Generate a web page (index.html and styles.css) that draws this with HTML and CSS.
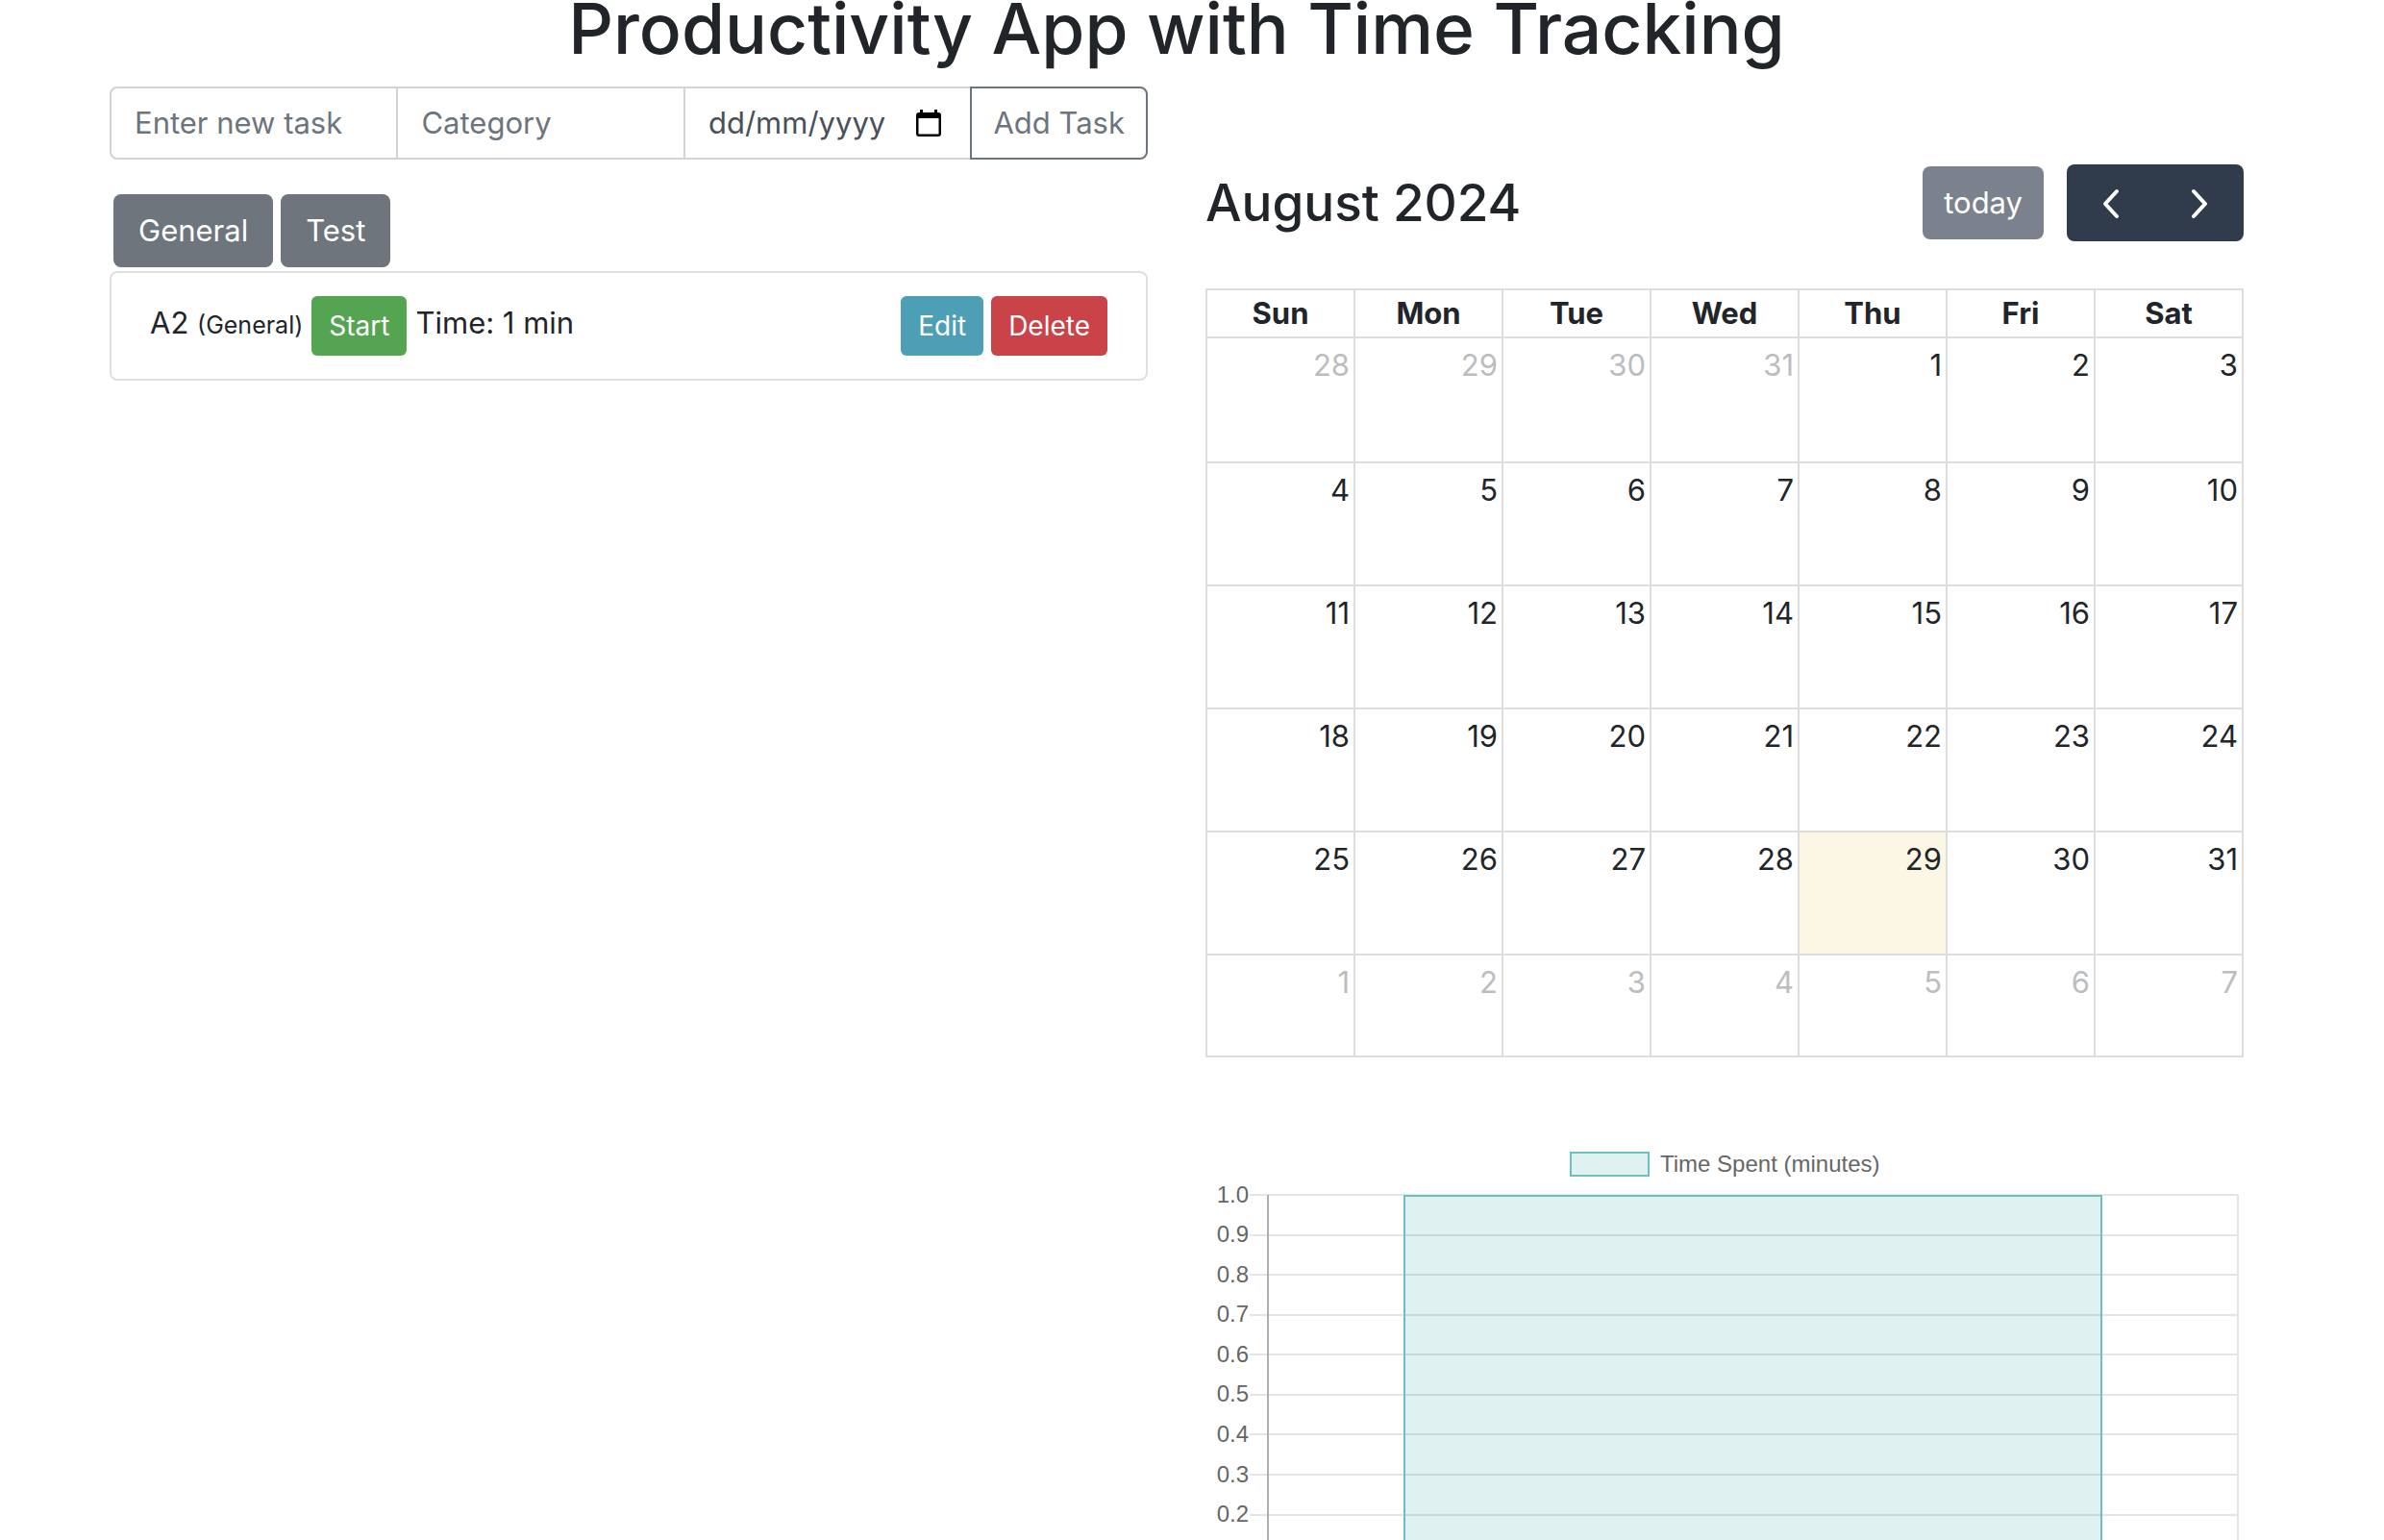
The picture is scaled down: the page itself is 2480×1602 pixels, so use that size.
FILE: index.html
```html
<!DOCTYPE html>
<html lang="en">
<head>
<meta charset="utf-8">
<title>Productivity App with Time Tracking</title>
<link rel="stylesheet" href="styles.css">
</head>
<body>
<main class="container">
  <h1 class="page-title">Productivity App with Time Tracking</h1>
  <div class="columns">
    <section class="tasks">
      <form class="input-group">
        <input class="field" type="text" placeholder="Enter new task" aria-label="Task">
        <input class="field" type="text" placeholder="Category" aria-label="Category">
        <label class="field date-field">
          <input class="date-input" type="text" placeholder="dd/mm/yyyy" aria-label="Due date">
          <svg class="date-icon" viewBox="0 0 26 30" aria-hidden="true"><path d="M4 1h3v3h12V1h3v3h1a3 3 0 0 1 3 3v19a3 3 0 0 1-3 3H3a3 3 0 0 1-3-3V7a3 3 0 0 1 3-3h1zM2.500 10v16.500h21V10z" fill-rule="evenodd"/></svg>
        </label>
        <button class="add-btn" type="button">Add Task</button>
      </form>
      <div class="categories">
        <button class="btn btn-secondary" type="button">General</button>
        <button class="btn btn-secondary" type="button">Test</button>
      </div>
      <ul class="task-list">
        <li class="task">
          <div class="task-info">
            <span>A2 <small>(General)</small></span>
            <button class="btn btn-sm btn-success" type="button">Start</button>
            <span>Time: 1 min</span>
          </div>
          <div class="task-actions">
            <button class="btn btn-sm btn-info" type="button">Edit</button>
            <button class="btn btn-sm btn-danger" type="button">Delete</button>
          </div>
        </li>
      </ul>
    </section>
    <section class="schedule">
      <div class="toolbar">
        <h2 class="month">August 2024</h2>
        <div class="toolbar-actions">
          <button class="today-btn" type="button">today</button>
          <div class="nav-group">
            <button class="nav-btn" type="button" aria-label="Previous month"><svg viewBox="0 0 48 48"><path d="M30 12 18 25 30 38"/></svg></button>
            <button class="nav-btn" type="button" aria-label="Next month"><svg viewBox="0 0 48 48"><path d="M18 12 30 25 18 38"/></svg></button>
          </div>
        </div>
      </div>
      <table class="calendar">
        <thead><tr><th>Sun</th><th>Mon</th><th>Tue</th><th>Wed</th><th>Thu</th><th>Fri</th><th>Sat</th></tr></thead>
        <tbody>
          <tr class="first"><td class="other">28</td><td class="other">29</td><td class="other">30</td><td class="other">31</td><td>1</td><td>2</td><td>3</td></tr>
          <tr><td>4</td><td>5</td><td>6</td><td>7</td><td>8</td><td>9</td><td>10</td></tr>
          <tr><td>11</td><td>12</td><td>13</td><td>14</td><td>15</td><td>16</td><td>17</td></tr>
          <tr><td>18</td><td>19</td><td>20</td><td>21</td><td>22</td><td>23</td><td>24</td></tr>
          <tr><td>25</td><td>26</td><td>27</td><td>28</td><td class="today">29</td><td>30</td><td>31</td></tr>
          <tr class="last"><td class="other">1</td><td class="other">2</td><td class="other">3</td><td class="other">4</td><td class="other">5</td><td class="other">6</td><td class="other">7</td></tr>
        </tbody>
      </table>
      <svg class="chart" viewBox="0 0 1080 424" role="img" aria-label="Time Spent (minutes)">
        <rect class="bar" x="380" y="21" width="81" height="24"/>
        <text class="chart-text" x="473" y="41">Time Spent (minutes)</text>
        <rect class="fill" x="208" y="65" width="724" height="420"/>
        <path class="grid" d="M46 65H1074M46 107H1074M46 148H1074M46 190H1074M46 231H1074M46 273H1074M46 314H1074M46 356H1074M46 398H1074M1074 65V424"/>
        <path class="axis" d="M65 65V424"/>
        <path class="outline" d="M207 424V66H932V424"/>
        <g class="chart-text ticks">
          <text x="45" y="73">1.0</text><text x="45" y="114">0.9</text><text x="45" y="156">0.8</text>
          <text x="45" y="197">0.7</text><text x="45" y="239">0.6</text><text x="45" y="280">0.5</text>
          <text x="45" y="322">0.4</text><text x="45" y="364">0.3</text><text x="45" y="405">0.2</text>
        </g>
      </svg>
    </section>
  </div>
</main>
</body>
</html>
```
FILE: styles.css
```css
* { box-sizing: border-box; }

body {
  margin: 0;
  padding-right: 32px;
  height: 100vh;
  overflow: hidden;
  background: #fff;
  color: #212529;
  font: 400 31px/48px Inter, "Liberation Sans", sans-serif;
}

button, input { font: inherit; color: inherit; }
button { cursor: pointer; }

.container {
  max-width: 2280px;
  margin: 0 auto;
  padding: 0 30px;
}

/* The page is scrolled down slightly, so the heading is cut at the top. */
.page-title {
  margin: -18px 0 12px;
  font-size: 73px;
  font-weight: 500;
  line-height: 96px;
  text-align: center;
}

.columns {
  display: grid;
  grid-template-columns: repeat(2, minmax(0, 1fr));
  gap: 60px;
}

/* Task form */
.input-group { display: flex; height: 76px; }

.field {
  flex: 1 1 0;
  min-width: 0;
  padding: 12px 24px;
  border: 2px solid #ced4da;
  border-radius: 0;
  background: #fff;
  color: #495057;
}
.field + .field { margin-left: -2px; }
.field:first-child { border-radius: 8px 0 0 8px; }
.field::placeholder { color: #6c757d; opacity: 1; }

.date-field { display: flex; align-items: center; justify-content: space-between; }
.date-input { flex: 1; min-width: 0; padding: 0; border: 0; outline: 0; }
.date-input::placeholder { color: #495057; opacity: 1; }
.date-icon { flex: none; width: 26px; height: 30px; margin-right: 6px; fill: #000; }

.add-btn {
  margin-left: -2px;
  padding: 12px 22px;
  border: 2px solid #6c757d;
  border-radius: 0 8px 8px 0;
  background: #fff;
  color: #6c757d;
}

.btn {
  padding: 14px 26px;
  border: 0;
  border-radius: 8px;
  color: #fff;
}
.btn-sm {
  padding: 10px 18px;
  border-radius: 6px;
  font-size: 28px;
  line-height: 42px;
}
.btn-secondary { background: #6e757c; }
.btn-success { background: #55a451; }
.btn-info { background: #4d9fb5; }
.btn-danger { background: #c94349; }

.categories { display: flex; gap: 8px; padding: 36px 4px 4px; }

.task-list { margin: 0; padding: 0; list-style: none; }
.task {
  display: flex;
  justify-content: space-between;
  padding: 24px 40px;
  border: 2px solid #dfdfdf;
  border-radius: 8px;
}
.task-info { display: flex; align-items: flex-start; gap: 9px; line-height: 56px; }
.task-info small { font-size: 25px; }
.task-actions { display: flex; gap: 8px; }

/* Calendar */
.schedule { padding-top: 80px; }
.toolbar {
  display: flex;
  align-items: center;
  justify-content: space-between;
  min-height: 82px;
  margin-bottom: 48px;
}
.month { margin: 0; font-size: 53px; font-weight: 500; line-height: 68px; }
.toolbar-actions { display: flex; align-items: center; gap: 24px; }
.today-btn {
  padding: 14px 22px;
  border: 0;
  border-radius: 8px;
  background: #7b828d;
  color: #fff;
}
.nav-group { display: flex; border-radius: 8px; overflow: hidden; }
.nav-btn { padding: 16px 22px; border: 0; background: #303c4c; line-height: 0; }
.nav-btn svg { width: 48px; height: 48px; fill: none; stroke: #fff; stroke-width: 4; stroke-linecap: round; stroke-linejoin: round; }

.calendar {
  width: 100%;
  border-collapse: collapse;
  table-layout: fixed;
}
.calendar th, .calendar td { border: 2px solid #ddd; padding: 0 4px; }
.calendar th { height: 50px; font-weight: 700; line-height: 48px; }
.calendar td { height: 128px; padding-top: 4px; vertical-align: top; text-align: right; }
.calendar .first td { height: 130px; }
.calendar .last td { height: 106px; }
.calendar .other { color: #bcbdbe; }
.calendar .today { background: #fbf7e4; }

/* Chart */
.chart { display: block; width: 100%; margin-top: 78px; }
.chart-text { fill: #666; font: 24px "Liberation Sans", Arial, sans-serif; }
.ticks { text-anchor: end; }
.bar { fill: #e0f1f1; stroke: #6ebfbf; stroke-width: 2; }
.fill { fill: #e0f1f1; }
.grid { fill: none; stroke: rgba(0, 0, 0, .1); stroke-width: 2; }
.axis { fill: none; stroke: #afafaf; stroke-width: 2; }
.outline { fill: none; stroke: #6ebfbf; stroke-width: 2; }
```
